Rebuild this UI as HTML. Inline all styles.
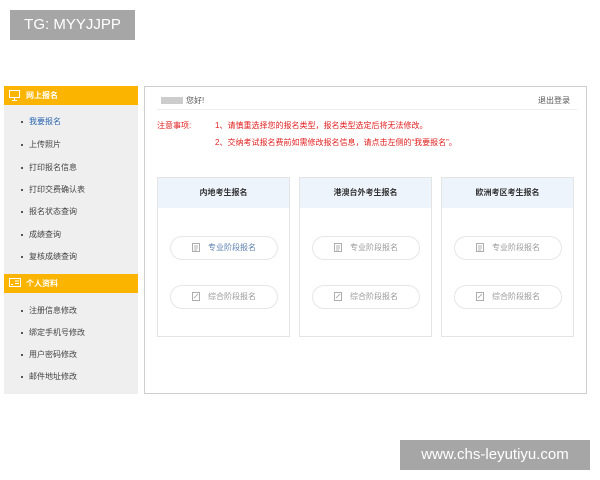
<!DOCTYPE html>
<html><head><meta charset="utf-8"><style>
*{margin:0;padding:0;box-sizing:border-box}
body{width:600px;height:480px;background:#fff;position:relative;overflow:hidden;font-family:"Liberation Sans","Noto Sans CJK SC",sans-serif;font-size:8px;color:#333}
.abs{position:absolute}
.wm{background:#a6a6a6;color:#fff;font-size:15px;line-height:30px;text-align:center}
.side{left:4px;top:86px;width:134px;height:308px;background:#efefef}
.hd{position:absolute;left:0;width:134px;height:19px;background:#fbb400;color:#fff;font-weight:bold;font-size:8px;line-height:19px;padding-left:22px}
.hd svg{position:absolute;left:5px;top:4px}
.it{position:absolute;left:17px;font-size:8px;color:#444;line-height:10px}
.it:before{content:"";display:inline-block;width:2px;height:2px;background:#555;margin-right:6px;vertical-align:middle}
.main{left:144px;top:86px;width:443px;height:308px;border:1px solid #cfcfcf;background:#fff}
.card{position:absolute;top:177px;width:133px;height:160px;border:1px solid #e4e4e4;background:#fff}
.card .t{height:30px;background:#edf4fc;text-align:center;line-height:30px;font-weight:bold;font-size:8px;color:#333}
.btn{position:absolute;left:12px;width:108px;height:24px;border:1px solid #e6e6e6;border-radius:12px;text-align:center;line-height:22px;font-size:8px;color:#999}
.btn svg{vertical-align:middle;margin-right:8px}
.red{color:#e01e1e;font-size:8px;position:absolute}
</style></head><body>
<div class="abs wm" style="left:10px;top:10px;width:125px;height:30px">TG: MYYJJPP</div>
<div class="abs wm" style="left:400px;top:440px;width:190px;height:30px">www.chs-leyutiyu.com</div>

<div class="abs side">
 <div class="hd" style="top:0"><svg width="11" height="11" viewBox="0 0 11 11" fill="none" stroke="#fff" stroke-width="1"><rect x="0.5" y="0.5" width="10" height="7"/><path d="M5.5 8v2M3 10.5h5"/></svg>网上报名</div>
 <div class="it" style="top:31px;color:#2b66b0">我要报名</div>
 <div class="it" style="top:54px">上传照片</div>
 <div class="it" style="top:77px">打印报名信息</div>
 <div class="it" style="top:99px">打印交费确认表</div>
 <div class="it" style="top:121px">报名状态查询</div>
 <div class="it" style="top:144px">成绩查询</div>
 <div class="it" style="top:166px">复核成绩查询</div>
 <div class="hd" style="top:188px"><svg width="12" height="9" viewBox="0 0 12 9" fill="none" stroke="#fff" stroke-width="1"><rect x="0.5" y="0.5" width="11" height="8"/><path d="M6 3h4M6 5.5h4M2 6.5h2"/></svg>个人资料</div>
 <div class="it" style="top:220px">注册信息修改</div>
 <div class="it" style="top:242px">绑定手机号修改</div>
 <div class="it" style="top:264px">用户密码修改</div>
 <div class="it" style="top:286px">邮件地址修改</div>
</div>

<div class="abs main">
 <div class="abs" style="left:16px;top:8px;color:#555"><span style="display:inline-block;width:22px;height:7px;background:#ccc;vertical-align:middle;margin-right:3px"></span>您好!</div>
 <div class="abs" style="right:16px;top:8px;color:#555">退出登录</div>
 <div class="abs" style="left:12px;top:22px;width:420px;height:1px;background:#eee"></div>
 <div class="red" style="left:12px;top:33px">注意事项:</div>
 <div class="red" style="left:70px;top:33px">1、请慎重选择您的报名类型，报名类型选定后将无法修改。</div>
 <div class="red" style="left:70px;top:50px">2、交纳考试报名费前如需修改报名信息，请点击左侧的“我要报名”。</div>
</div>

<div class="card" style="left:157px"><div class="t">内地考生报名</div>
 <div class="btn" style="top:58px;color:#5a7fae"><svg width="8" height="9" viewBox="0 0 8 9" fill="none" stroke="#999" stroke-width=".8"><rect x=".5" y=".5" width="7" height="8"/><path d="M2 3h4M2 5h4M2 7h3"/></svg>专业阶段报名</div>
 <div class="btn" style="top:107px"><svg width="8" height="9" viewBox="0 0 8 9" fill="none" stroke="#999" stroke-width=".8"><rect x=".5" y=".5" width="7" height="8"/><path d="M2 6l4-4"/></svg>综合阶段报名</div>
</div>
<div class="card" style="left:299px"><div class="t">港澳台外考生报名</div>
 <div class="btn" style="top:58px"><svg width="8" height="9" viewBox="0 0 8 9" fill="none" stroke="#999" stroke-width=".8"><rect x=".5" y=".5" width="7" height="8"/><path d="M2 3h4M2 5h4M2 7h3"/></svg>专业阶段报名</div>
 <div class="btn" style="top:107px"><svg width="8" height="9" viewBox="0 0 8 9" fill="none" stroke="#999" stroke-width=".8"><rect x=".5" y=".5" width="7" height="8"/><path d="M2 6l4-4"/></svg>综合阶段报名</div>
</div>
<div class="card" style="left:441px"><div class="t">欧洲考区考生报名</div>
 <div class="btn" style="top:58px"><svg width="8" height="9" viewBox="0 0 8 9" fill="none" stroke="#999" stroke-width=".8"><rect x=".5" y=".5" width="7" height="8"/><path d="M2 3h4M2 5h4M2 7h3"/></svg>专业阶段报名</div>
 <div class="btn" style="top:107px"><svg width="8" height="9" viewBox="0 0 8 9" fill="none" stroke="#999" stroke-width=".8"><rect x=".5" y=".5" width="7" height="8"/><path d="M2 6l4-4"/></svg>综合阶段报名</div>
</div>
</body></html>
